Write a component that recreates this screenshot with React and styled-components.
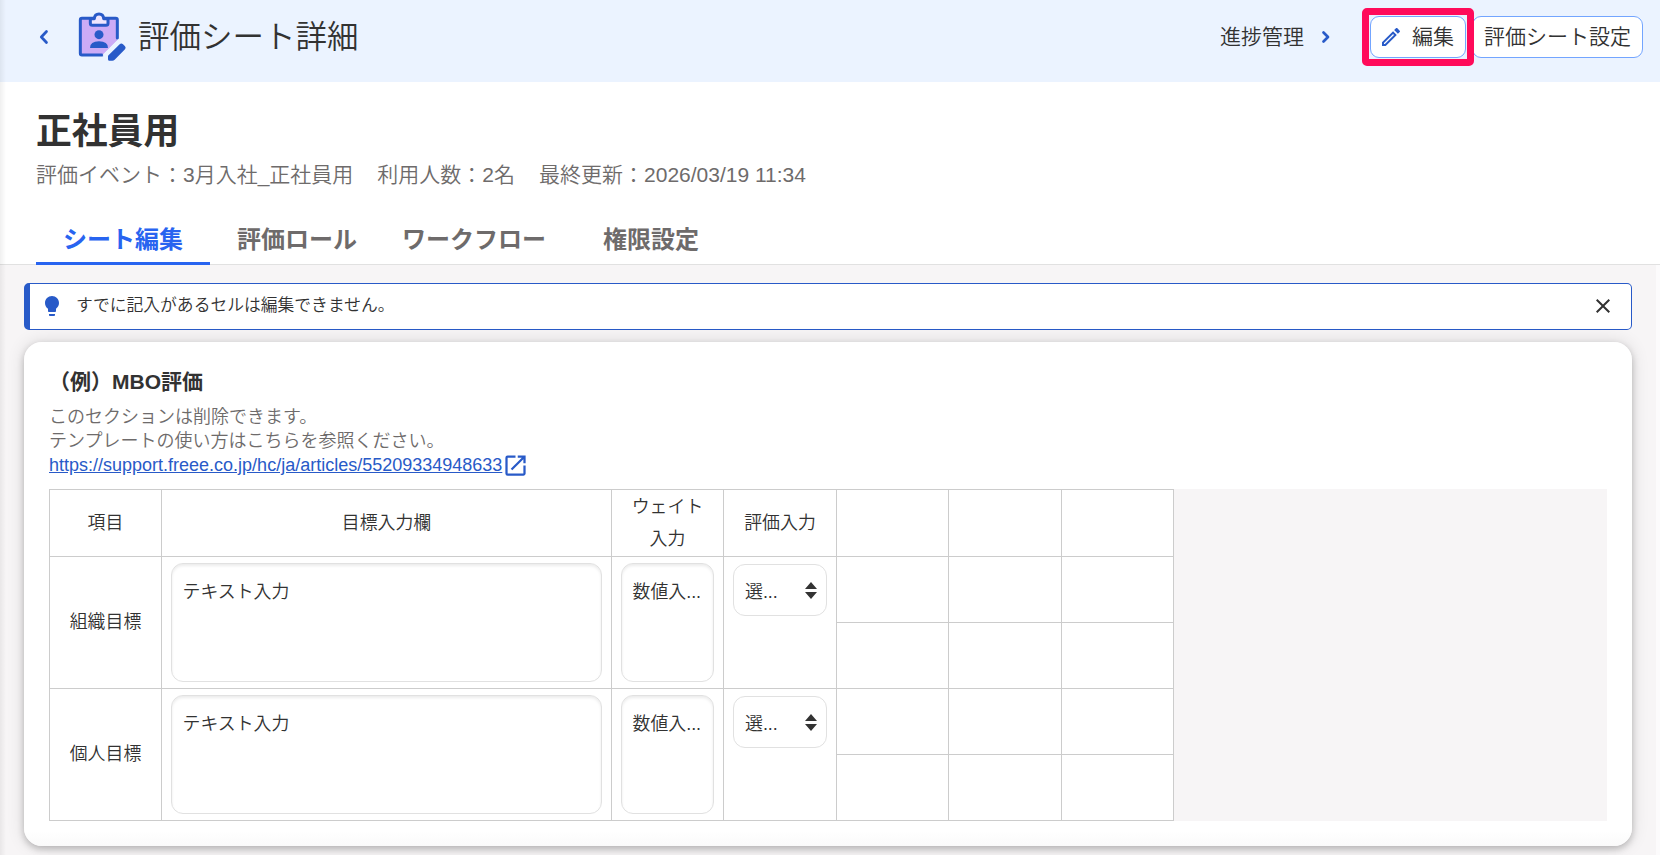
import React from 'react';
import { useState } from 'react';
import styled, { createGlobalStyle } from 'styled-components';
import { MdClose, MdLightbulb, MdOpenInNew, MdOutlineEdit } from 'react-icons/md';

const tabs = ['シート編集', '評価ロール', 'ワークフロー', '権限設定'];
const goals = ['組織目標', '個人目標'];
const articleUrl = 'https://support.freee.co.jp/hc/ja/articles/55209334948633';

function Chevron({ left }) {
  return (
    <svg width="12" height="18" viewBox="0 0 12 18" fill="none" stroke="#285ac8" strokeWidth="2.7" strokeLinecap="round" strokeLinejoin="round">
      <path d={left ? 'M8.5 3.5L3.3 9L8.5 14.5' : 'M3.5 4.5L8 9L3.5 13.5'} />
    </svg>
  );
}

function SheetIcon() {
  return (
    <svg width="50" height="52" viewBox="234 34 150 156">
      <path d="M241 56H352V122L308 166H241Z" fill="#ccabf6" />
      <path d="M352 115V61Q352 56 347 56H246Q241 56 241 61V161Q241 166 246 166H306" fill="none" stroke="#285ac8" strokeWidth="9" strokeLinecap="round" />
      <path d="M271 57H283Q284 43 297 43Q310 43 311 57H324V71Q324 77 318 77H277Q271 77 271 71Z" fill="#efe6fe" stroke="#285ac8" strokeWidth="9" strokeLinejoin="round" />
      <circle cx="297" cy="105" r="13.5" fill="#285ac8" />
      <path d="M270 145Q270 125 297 125Q324 125 324 145Z" fill="#285ac8" />
      <path d="M314 172L362 124" stroke="#ebf3ff" strokeWidth="18" />
      <path d="M359 134Q364 129 369 134L375 140Q379 145 375 149L344 180Q341 183 337 183H327Q324 183 324 179V170Q324 167 327 165Z" fill="#285ac8" />
    </svg>
  );
}

function SortIcon() {
  return (
    <svg width="12" height="17" viewBox="0 0 12 17" fill="#333">
      <path d="M6 0L12 7H0ZM0 10H12L6 17Z" />
    </svg>
  );
}

function GoalRow({ name }) {
  return (
    <>
      <Cell $tall><RowLabel>{name}</RowLabel></Cell>
      <Cell $tall $field><TextBox>テキスト入力</TextBox></Cell>
      <Cell $tall $field><TextBox>数値入...</TextBox></Cell>
      <Cell $tall $field>
        <SelectBox><span>選...</span><SortIcon /></SelectBox>
      </Cell>
      {[0, 1, 2, 3, 4, 5].map(n => <Cell key={n} />)}
    </>
  );
}

function App() {

  const [active, setActive] = useState(0);
  const [notice, setNotice] = useState(true);

  return (
    <Screen>
      <GlobalStyle />
      <Header>
        <BackButton><Chevron left /></BackButton>
        <SheetIcon />
        <PageTitle>評価シート詳細</PageTitle>
        <ProgressLink>進捗管理<Chevron /></ProgressLink>
        <EditButton><MdOutlineEdit size={24} color="#285ac8" />編集</EditButton>
        <HeaderButton>評価シート設定</HeaderButton>
      </Header>

      <Summary>
        <SheetName>正社員用</SheetName>
        <Meta>
          <span>評価イベント：3月入社_正社員用</span>
          <span>利用人数：2名</span>
          <span>最終更新：2026/03/19 11:34</span>
        </Meta>
        <Tabs>
          {tabs.map((tab, i) => (
            <Tab key={tab} $active={i === active} onClick={() => setActive(i)}>{tab}</Tab>
          ))}
        </Tabs>
      </Summary>

      <Body>
        {notice && (
          <Notice>
            <MdLightbulb size={24} color="#285ac8" />
            <NoticeText>すでに記入があるセルは編集できません。</NoticeText>
            <CloseButton onClick={() => setNotice(false)}><MdClose size={24} /></CloseButton>
          </Notice>
        )}
        <Card>
          <SectionTitle>（例）MBO評価</SectionTitle>
          <Description>
            <p>このセクションは削除できます。</p>
            <p>テンプレートの使い方はこちらを参照ください。</p>
            <ArticleLink href={articleUrl}><u>{articleUrl}</u><MdOpenInNew size={27} /></ArticleLink>
          </Description>
          <SheetArea>
            <Sheet>
              <Cell>項目</Cell>
              <Cell>目標入力欄</Cell>
              <Cell>ウェイト<br />入力</Cell>
              <Cell>評価入力</Cell>
              <Cell />
              <Cell />
              <Cell />
              {goals.map(goal => <GoalRow key={goal} name={goal} />)}
            </Sheet>
          </SheetArea>
        </Card>
      </Body>
      <EdgeShadow />
    </Screen>
  );
}

const GlobalStyle = createGlobalStyle`
  * {
    box-sizing: border-box;
  }
  body {
    margin: 0;
    overflow: hidden;
    color: #323232;
    font-family: "Liberation Sans", "Noto Sans CJK JP", sans-serif;
    font-weight: 350;
  }
  button {
    font: inherit;
    color: inherit;
    padding: 0;
    border: none;
    background: none;
    cursor: pointer;
  }
  p, h1, h2, h3 {
    margin: 0;
  }
  svg {
    flex-shrink: 0;
  }
`;

const Screen = styled.div`
  position: relative;
  display: flex;
  flex-direction: column;
  height: 855px;
  overflow: hidden;
  background: white;
`;

const Header = styled.header`
  display: flex;
  align-items: center;
  height: 82px;
  padding: 0 17px 8px 38px;
  background: #ebf3ff;
`;

const BackButton = styled.button`
  display: flex;
  margin-right: 28px;
`;

const PageTitle = styled.h1`
  margin-left: 10px;
  font-size: 31.5px;
  font-weight: 350;
  line-height: 40px;
`;

const ProgressLink = styled.a`
  display: flex;
  align-items: center;
  gap: 16px;
  margin-left: auto;
  margin-right: 38px;
  font-size: 21px;
  line-height: 40px;
`;

const HeaderButton = styled.button`
  display: flex;
  align-items: center;
  height: 42px;
  padding: 0 11px;
  border: 1px solid #73a5ff;
  border-radius: 9px;
  background: white;
  font-size: 21px;
  line-height: 40px;
`;

const EditButton = styled(HeaderButton)`
  position: relative;
  gap: 9px;
  padding: 0 11px 0 8px;
  margin-right: 6px;

  &::after {
    content: "";
    position: absolute;
    z-index: 1;
    inset: -9px;
    border: 7px solid #ff0a5a;
    border-radius: 5px;
  }
`;

const Summary = styled.section`
  height: 183px;
  padding: 25px 36px 0;
  border-bottom: 1px solid #e1e1e1;
`;

const SheetName = styled.h2`
  font-size: 35.8px;
  line-height: 50px;
`;

const Meta = styled.div`
  display: flex;
  gap: 24px;
  height: 64px;
  color: #6e6b6b;
  font-size: 21px;
  line-height: 35px;
`;

const Tabs = styled.nav`
  display: flex;
  height: 44px;
`;

const Tab = styled.button`
  min-width: 174px;
  height: 44px;
  padding: 0 18px 4px;
  border-bottom: 3px solid ${props => (props.$active ? '#2864f0' : 'transparent')};
  color: ${props => (props.$active ? '#2864f0' : '#6e6b6b')};
  font-size: 24px;
  font-weight: bold;
  line-height: 24px;
`;

const Body = styled.main`
  flex: 1;
  padding: 18px 24px 0;
  border-right: 4px solid #fcfbfc;
  background: #f7f5f6;
`;

const Notice = styled.div`
  display: flex;
  align-items: center;
  width: 1608px;
  height: 47px;
  padding: 0 16px 2px 10px;
  border: 1px solid #285ac8;
  border-left-width: 6px;
  border-radius: 5px;
  background: white;
`;

const NoticeText = styled.p`
  margin-left: 12px;
  font-size: 16.8px;
  line-height: 25px;
`;

const CloseButton = styled.button`
  display: flex;
  margin-left: auto;
`;

const Card = styled.section`
  width: 1608px;
  height: 504px;
  margin-top: 12px;
  padding: 26px 25px 0;
  border-radius: 18px;
  background: linear-gradient(white 97%, #fafafa);
  box-shadow: 0 0 18px rgba(0, 0, 0, 0.12), 0 3px 7px rgba(0, 0, 0, 0.22);
`;

const SectionTitle = styled.h3`
  font-size: 21px;
  line-height: 27px;
`;

const Description = styled.div`
  height: 94px;
  padding-top: 10px;
  color: #6e6b6b;
  font-size: 18px;
  line-height: 24.4px;
`;

const ArticleLink = styled.a`
  display: flex;
  align-items: center;
  height: 24px;
  color: #285ac8;
  text-decoration: none;

  u {
    padding-bottom: 1px;
  }
`;

const SheetArea = styled.div`
  height: 332px;
  background: #f7f5f6;
`;

const Sheet = styled.div`
  display: grid;
  grid-template-columns: 112px 450px 112px 113px 112px 113px 112px;
  grid-template-rows: 67px repeat(4, 66px);
  grid-auto-flow: row dense;
  width: 1125px;
  border: 1px solid #ccc;
  border-width: 1px 0 0 1px;
  background: white;
`;

const Cell = styled.div`
  display: flex;
  align-items: ${props => (props.$field ? 'flex-start' : 'center')};
  justify-content: center;
  grid-row: ${props => (props.$tall ? 'span 2' : 'auto')};
  padding: ${props => (props.$field ? '6px 9px' : '0')};
  border: 1px solid #ccc;
  border-width: 0 1px 1px 0;
  font-size: 17.9px;
  line-height: 32px;
  text-align: center;
`;

const RowLabel = styled.span`
  padding-bottom: 2px;
`;

const TextBox = styled.div`
  flex: 1;
  height: 119px;
  padding: 12px 0 0 10.5px;
  border: 1px solid #e1e1e1;
  border-radius: 12px;
  box-shadow: inset 0 2px 3px rgba(0, 0, 0, 0.08);
  text-align: left;
  white-space: nowrap;
`;

const SelectBox = styled.div`
  display: flex;
  flex: 1;
  align-items: center;
  justify-content: space-between;
  height: 52px;
  margin-top: 1px;
  padding: 0 9px 0 11px;
  border: 1px solid #e1e1e1;
  border-radius: 12px;

  span {
    padding-top: 3px;
  }
`;

const EdgeShadow = styled.div`
  position: absolute;
  top: 0;
  left: 0;
  width: 6px;
  height: 100%;
  background: linear-gradient(to right, rgba(0, 0, 0, 0.06), transparent);
  pointer-events: none;
`;

export default App;
